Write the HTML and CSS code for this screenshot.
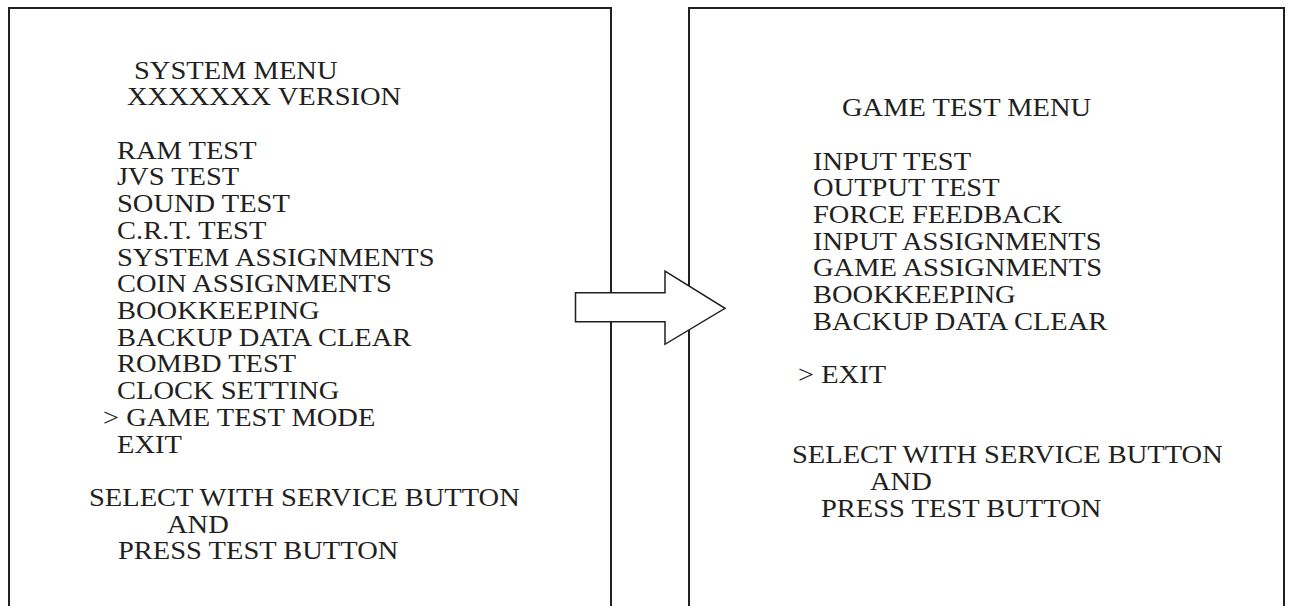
FILE: index.html
```html
<!DOCTYPE html>
<html lang="en">
<head>
    <meta charset="UTF-8">
    <meta name="viewport" content="width=device-width, initial-scale=1.0">
    <title>System Menu / Game Test Menu</title>
    <link rel="stylesheet" href="styles.css">
</head>
<body>
    <div class="screens">
        <section class="screen screen-system">
            <div class="line system-title">SYSTEM MENU</div>
            <div class="line system-version">XXXXXXX VERSION</div>
            <ul class="menu">
                <li class="line item">RAM TEST</li>
                <li class="line item">JVS TEST</li>
                <li class="line item">SOUND TEST</li>
                <li class="line item">C.R.T. TEST</li>
                <li class="line item">SYSTEM ASSIGNMENTS</li>
                <li class="line item">COIN ASSIGNMENTS</li>
                <li class="line item">BOOKKEEPING</li>
                <li class="line item">BACKUP DATA CLEAR</li>
                <li class="line item">ROMBD TEST</li>
                <li class="line item">CLOCK SETTING</li>
                <li class="line item selected">&gt; GAME TEST MODE</li>
                <li class="line item">EXIT</li>
            </ul>
            <div class="footer">
                <div class="line hint-select">SELECT WITH SERVICE BUTTON</div>
                <div class="line hint-and">AND</div>
                <div class="line hint-press">PRESS TEST BUTTON</div>
            </div>
        </section>

        <section class="screen screen-game">
            <div class="line game-title">GAME TEST MENU</div>
            <ul class="menu">
                <li class="line item">INPUT TEST</li>
                <li class="line item">OUTPUT TEST</li>
                <li class="line item">FORCE FEEDBACK</li>
                <li class="line item">INPUT ASSIGNMENTS</li>
                <li class="line item">GAME ASSIGNMENTS</li>
                <li class="line item">BOOKKEEPING</li>
                <li class="line item">BACKUP DATA CLEAR</li>
                <li class="line item selected exit">&gt; EXIT</li>
            </ul>
            <div class="footer">
                <div class="line hint-select">SELECT WITH SERVICE BUTTON</div>
                <div class="line hint-and">AND</div>
                <div class="line hint-press">PRESS TEST BUTTON</div>
            </div>
        </section>

        <!-- arrow sits on top of both screen borders -->
        <svg class="arrow" width="160" height="84" viewBox="0 0 160 84">
            <polygon points="5.5,26.7 95,26.7 95,5 155,42.3 95,78.3 95,55.7 5.5,55.7"
                     fill="#fff" stroke="#231f20" stroke-width="1.5" stroke-linejoin="miter"/>
        </svg>
    </div>
</body>
</html>
```

FILE: styles.css
```css
html, body {
    margin: 0;
    padding: 0;
    background: #fff;
    overflow: hidden;
}
body {
    font-family: "Liberation Serif", "Times New Roman", serif;
    color: #231f20;
}
.screens {
    position: relative;
    display: flex;
    align-items: stretch;
    gap: 76px;
    height: 606px;
    padding: 7px 0 0 8px;
    box-sizing: border-box;
}
.screen {
    flex: none;
    border: 2px solid #231f20;
    border-bottom: none;
    box-sizing: border-box;
    font-size: 25px;
    line-height: 26.7px;
}
.screen-system {
    width: 604px;
    padding-top: 48.7px;
}
.screen-game {
    width: 597px;
    padding-top: 86.2px;
}
.line {
    display: block;
    width: max-content;
    white-space: pre;
    transform: scaleX(1.14);
    transform-origin: 0 0;
}
.menu {
    list-style: none;
    margin: 26.7px 0 0;
    padding: 0;
}
.footer {
    margin-top: 26.7px;
}
.screen-game .footer {
    margin-top: 53.4px;
}
.screen-game .exit {
    margin-top: 26.7px;
}

/* left screen */
.system-title { margin-left: 124px; }
.system-version { margin-left: 117px; }
.screen-system .item { margin-left: 107px; }
.screen-system .selected { margin-left: 93px; }
.screen-system .hint-select { margin-left: 79px; }
.screen-system .hint-and { margin-left: 157px; }
.screen-system .hint-press { margin-left: 108px; }

/* right screen */
.game-title { margin-left: 152px; }
.screen-game .item { margin-left: 123px; }
.screen-game .selected { margin-left: 108px; }
.screen-game .hint-select { margin-left: 102px; }
.screen-game .hint-and { margin-left: 180px; }
.screen-game .hint-press { margin-left: 131px; }

.arrow {
    position: absolute;
    left: 570px;
    top: 266px;
}
```
